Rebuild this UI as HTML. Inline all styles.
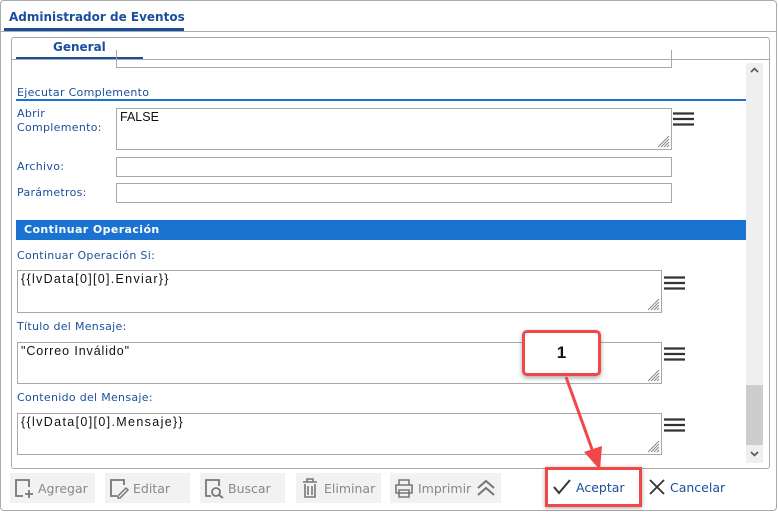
<!DOCTYPE html>
<html><head><meta charset="utf-8"><style>
*{box-sizing:border-box;margin:0;padding:0}
body{width:778px;height:512px;background:#fff;position:relative;overflow:hidden;font-family:"DejaVu Sans",Verdana,sans-serif}
.a{position:absolute}
.lbl{position:absolute;font-size:11px;color:#1a4f9c;letter-spacing:0.3px;line-height:14px}
.inp{position:absolute;border:1px solid #a8a8a8;background:#fff;font-family:"Liberation Sans",Arial,sans-serif;font-size:12.5px;color:#111;padding:1px 3px}
.ham{position:absolute;width:21px;height:14px}
.btn{position:absolute;top:473px;height:30px;background:#f2f2f2;font-family:"DejaVu Sans",sans-serif;font-size:12.5px;color:#888;display:flex;align-items:center}
.btn svg{margin:0 3px 0 3px}
</style></head><body>
<div class="a" style="left:0;top:0;width:777px;height:511px;border:1px solid #aaa;border-radius:4px"></div>
<div class="a" style="left:9px;top:10px;font-weight:bold;font-size:12px;color:#1a4f9c">Administrador de Eventos</div>
<div class="a" style="left:4px;top:28px;width:180px;height:3px;background:#1a4f9c"></div>
<div class="a" style="left:1px;top:31px;width:776px;height:1px;background:#aaa"></div>
<div class="a" style="left:11px;top:37px;width:759px;height:432px;border:1px solid #aaa;border-radius:3px"></div>
<div class="a" style="left:53px;top:40px;font-weight:bold;font-size:12px;color:#1a4f9c">General</div>
<div class="a" style="left:16px;top:57px;width:127px;height:3px;background:#1a4f9c"></div>
<div class="a" style="left:12px;top:59px;width:757px;height:1px;background:#aaa"></div>
<div class="a" style="left:746px;top:63px;width:17px;height:400px;background:#efefef"></div>
<div class="a" style="left:746px;top:385px;width:17px;height:60px;background:#cdcdcd"></div>
<svg class="a" style="left:749px;top:66px" width="11" height="8"><path d="M2 6 L5.5 2.5 L9 6" stroke="#555" stroke-width="1.6" fill="none"/></svg>
<svg class="a" style="left:749px;top:450px" width="11" height="8"><path d="M2 2 L5.5 5.5 L9 2" stroke="#555" stroke-width="1.6" fill="none"/></svg>
<div class="a" style="left:116px;top:50px;width:556px;height:18px;border:1px solid #a8a8a8;border-top:none"></div>
<div class="lbl" style="left:17px;top:86px">Ejecutar Complemento</div>
<div class="a" style="left:16px;top:99px;width:730px;height:2px;background:#1a73d0"></div>
<div class="lbl" style="left:17px;top:107px">Abrir<br>Complemento:</div>
<div class="inp" style="left:116px;top:108px;width:556px;height:42px">FALSE</div>
<div class="lbl" style="left:17px;top:160px">Archivo:</div>
<div class="inp" style="left:116px;top:157px;width:556px;height:20px"></div>
<div class="lbl" style="left:17px;top:186px">Parámetros:</div>
<div class="inp" style="left:116px;top:183px;width:556px;height:20px"></div>
<div class="a" style="left:16px;top:220px;width:730px;height:20px;background:#1a73d0;color:#fff;font-weight:bold;font-size:11px;letter-spacing:0.4px;padding:3px 0 0 8px">Continuar Operación</div>
<div class="lbl" style="left:17px;top:249px">Continuar Operación Si:</div>
<div class="inp" style="left:17px;top:270px;width:645px;height:43px;letter-spacing:1.3px">{{lvData[0][0].Enviar}}</div>
<div class="lbl" style="left:17px;top:320px">Título del Mensaje:</div>
<div class="inp" style="left:17px;top:342px;width:645px;height:42px;letter-spacing:0.9px">"Correo Inválido"</div>
<div class="lbl" style="left:17px;top:391px">Contenido del Mensaje:</div>
<div class="inp" style="left:17px;top:413px;width:645px;height:42px;letter-spacing:1.35px">{{lvData[0][0].Mensaje}}</div>
<svg class="a" style="left:658px;top:136px" width="12" height="12"><path d="M11 3L3 11M11 6L6 11M11 9L9 11M11 0L0 11" stroke="#888" stroke-width="1"/></svg>
<svg class="a" style="left:648px;top:299px" width="12" height="12"><path d="M11 3L3 11M11 6L6 11M11 9L9 11M11 0L0 11" stroke="#888" stroke-width="1"/></svg>
<svg class="a" style="left:648px;top:370px" width="12" height="12"><path d="M11 3L3 11M11 6L6 11M11 9L9 11M11 0L0 11" stroke="#888" stroke-width="1"/></svg>
<svg class="a" style="left:648px;top:441px" width="12" height="12"><path d="M11 3L3 11M11 6L6 11M11 9L9 11M11 0L0 11" stroke="#888" stroke-width="1"/></svg>
<svg class="ham" style="left:673px;top:112px"><path d="M0 1.5H21M0 7H21M0 12.5H21" stroke="#333" stroke-width="2.2"/></svg>
<svg class="ham" style="left:664px;top:276px"><path d="M0 1.5H21M0 7H21M0 12.5H21" stroke="#333" stroke-width="2.2"/></svg>
<svg class="ham" style="left:664px;top:347px"><path d="M0 1.5H21M0 7H21M0 12.5H21" stroke="#333" stroke-width="2.2"/></svg>
<svg class="ham" style="left:664px;top:418px"><path d="M0 1.5H21M0 7H21M0 12.5H21" stroke="#333" stroke-width="2.2"/></svg>
<div class="btn" style="left:10px;width:85px"><svg width="22" height="22"><path d="M10 19H3V3H16V10" stroke="#777" stroke-width="1.8" fill="none"/><path d="M16 13V21M12 17H20" stroke="#777" stroke-width="1.8"/></svg>Agregar</div>
<div class="btn" style="left:105px;width:85px"><svg width="22" height="22"><path d="M9 19H3V3H16V8" stroke="#777" stroke-width="1.8" fill="none"/><path d="M10 19L18 11L20 13L12 21H10Z" stroke="#777" stroke-width="1.5" fill="none"/></svg>Editar</div>
<div class="btn" style="left:200px;width:85px"><svg width="22" height="22"><path d="M8 19H3V3H16V9" stroke="#777" stroke-width="1.8" fill="none"/><circle cx="13" cy="15" r="4" stroke="#777" stroke-width="1.8" fill="none"/><path d="M16 18L20 21" stroke="#777" stroke-width="2"/></svg>Buscar</div>
<div class="btn" style="left:296px;width:85px"><svg width="22" height="22"><path d="M4 5H18M8 5V2H14V5M6 7V20H16V7M9 9V18M13 9V18" stroke="#777" stroke-width="1.6" fill="none"/></svg>Eliminar</div>
<div class="btn" style="left:390px;width:111px"><svg width="22" height="22"><path d="M6 8V3H16V8M3 8H19V16H3ZM6 13H16V20H6Z" stroke="#777" stroke-width="1.6" fill="#f2f2f2"/></svg>Imprimir<svg width="22" height="22" style="margin-left:4px"><path d="M3 11L11 4L19 11M3 18L11 11L19 18" stroke="#777" stroke-width="2" fill="none"/></svg></div>
<div class="a" style="left:551px;top:477px;font-family:'DejaVu Sans',sans-serif;font-size:12.5px;color:#1a4f9c;display:flex;align-items:center"><svg width="22" height="20"><path d="M3 10L8 16L19 3" stroke="#333" stroke-width="2" fill="none"/></svg><span style="margin-left:3px">Aceptar</span></div>
<div class="a" style="left:648px;top:477px;font-family:'DejaVu Sans',sans-serif;font-size:12.5px;color:#1a4f9c;display:flex;align-items:center"><svg width="18" height="20"><path d="M2 3L16 17M16 3L2 17" stroke="#333" stroke-width="1.8"/></svg><span style="margin-left:4px">Cancelar</span></div>
<div class="a" style="left:545px;top:467px;width:97px;height:40px;border:3px solid #f04848;box-shadow:0 1px 4px rgba(0,0,0,.35)"></div>
<div class="a" style="left:522px;top:330px;width:79px;height:46px;border:3px solid #f04848;border-radius:5px;background:#fff;box-shadow:0 2px 5px rgba(0,0,0,.35);text-align:center;font-family:'Liberation Sans',Arial,sans-serif;font-weight:bold;font-size:17px;line-height:40px;color:#111">1</div>
<svg class="a" style="left:0;top:0" width="778" height="512"><path d="M566 377L593 452" stroke="#f04848" stroke-width="3"/><path d="M584 452L600 470L602 446Z" fill="#f04848"/></svg>
</body></html>
